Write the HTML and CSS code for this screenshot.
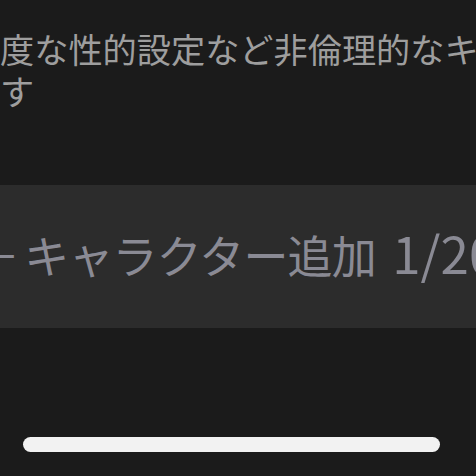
FILE: index.html
```html
<!DOCTYPE html>
<html lang="ja">
<head>
<meta charset="utf-8">
<link rel="stylesheet" href="styles.css">
</head>
<body>
<div class="screen">
  <div class="notice">
    <div class="line">度な性的設定など非倫理的なキャラクター</div>
    <div class="line">す</div>
  </div>
  <div class="add-box">
    <span class="add-label"><span class="plus">＋</span>キャラクター追加 <span class="count">1/20</span></span>
  </div>
  <div class="home-area">
    <div class="home-indicator"></div>
  </div>
</div>
</body>
</html>
```

FILE: styles.css
```css
html, body {
  margin: 0;
  padding: 0;
  background: #1b1b1b;
}
.screen {
  width: 476px;
  height: 476px;
  overflow: hidden;
  display: flex;
  flex-direction: column;
  font-family: "Noto Sans CJK JP", "Noto Sans", sans-serif;
}
.notice {
  padding-top: 27px;
  color: #9e9e9e;
  font-size: 34.2px;
  line-height: 42px;
}
.line {
  white-space: nowrap;
  overflow: hidden;
}
.add-box {
  margin-top: 74px;
  height: 143px;
  box-sizing: border-box;
  padding-bottom: 4px;
  background: #2c2c2c;
  display: flex;
  align-items: center;
  overflow: hidden;
}
.add-label {
  margin-left: -25px;
  color: #8a8a94;
  font-size: 45px;
  letter-spacing: -0.8px;
  line-height: 60px;
  white-space: nowrap;
}
.plus {
  margin-right: 5px;
}
.count {
  font-size: 51px;
  letter-spacing: 0;
  line-height: 0;
  margin-left: 7px;
}
.home-area {
  flex: 1;
  display: flex;
  padding-left: 23px;
  padding-top: 109px;
}
.home-indicator {
  width: 417px;
  height: 15px;
  border-radius: 8px;
  background: #f2f2f2;
}
```
